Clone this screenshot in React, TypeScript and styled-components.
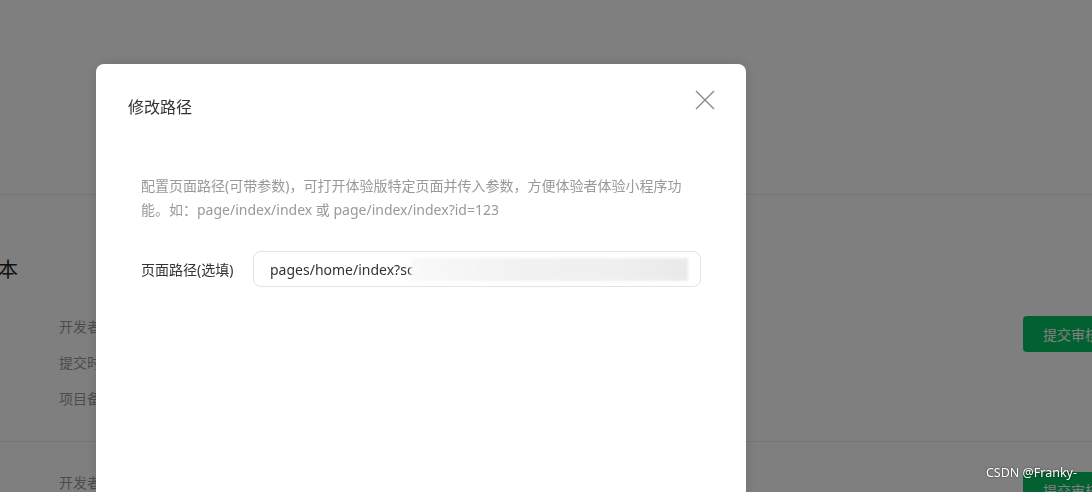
import React from "react"
import styled, { createGlobalStyle } from "styled-components"

const GlobalStyle = createGlobalStyle`
  html, body {
    margin: 0;
    padding: 0;
    background: #fff;
    overflow: hidden;
  }
  body {
    font-family: "Noto Sans", "Noto Sans CJK SC", sans-serif;
    width: 1092px;
    height: 492px;
  }
`

const Page = styled.div`
  width: 1240px;
  height: 492px;
  margin-left: -82px;
  background: #fff;
  overflow: hidden;
`

const TopArea = styled.div`
  height: 194px;
  border-bottom: 1px solid #eaeaea;
`

const Section = styled.section<{ $top: number }>`
  padding: ${(p) => p.$top}px 0 24px;
  border-bottom: 1px solid #eaeaea;
`

const SectionTitle = styled.h2`
  margin: 0 0 24px 20px;
  font-size: 20px;
  line-height: 30px;
  font-weight: 400;
  color: #222;
`

const InfoRow = styled.div`
  display: flex;
  align-items: flex-start;
  padding-left: 141px;
  padding-right: 39px;
`

const InfoList = styled.div`
  flex: 1;
  display: flex;
  flex-direction: column;
`

const InfoItem = styled.div`
  font-size: 14px;
  line-height: 36px;
  height: 36px;
  color: #999;
`

const PrimaryButton = styled.button`
  margin-top: 7px;
  height: 36px;
  border: none;
  border-radius: 4px;
  background: #07c160;
  color: #fff;
  font-family: inherit;
  font-size: 14px;
  padding: 0 20px;
`

const Mask = styled.div`
  position: fixed;
  inset: 0;
  background: rgba(0, 0, 0, 0.5);
  padding: 64px 0 0 96px;
`

const Modal = styled.div`
  width: 650px;
  height: 460px;
  background: #fff;
  border-radius: 8px;
  box-shadow: 0 0 14px rgba(0, 0, 0, 0.12);
`

const ModalHeader = styled.div`
  display: flex;
  align-items: flex-start;
  justify-content: space-between;
  padding: 31px 30px 0 32px;
`

const ModalTitle = styled.h3`
  margin: 0;
  font-size: 16px;
  line-height: 24px;
  font-weight: 400;
  color: #333;
`

const CloseButton = styled.button`
  margin-top: -6px;
  width: 22px;
  height: 22px;
  border: none;
  background: none;
  padding: 0;
  display: flex;
  align-items: center;
  justify-content: center;
`

const ModalBody = styled.div`
  padding: 55px 45px 0;
`

const Desc = styled.p`
  margin: 0;
  max-width: 548px;
  font-size: 14px;
  line-height: 24px;
  color: #999;
`

const FormRow = styled.div`
  display: flex;
  align-items: center;
  margin-top: 29px;
`

const FormLabel = styled.label`
  width: 112px;
  flex-shrink: 0;
  font-size: 14px;
  color: #333;
`

const InputBox = styled.div`
  flex: 1;
  height: 34px;
  border: 1px solid #e3e3e3;
  border-radius: 8px;
  display: flex;
  align-items: center;
  padding: 0 12px 0 16px;
  overflow: hidden;
`

const InputText = styled.span`
  font-size: 14px;
  color: #333;
  white-space: nowrap;
`

const Blur = styled.span`
  flex: 1;
  height: 23px;
  margin-left: -3px;
  background: linear-gradient(90deg, #f9f9f9 0%, #f1f1f1 40%, #efefef 75%, #e9e9e9 100%);
  filter: blur(1.5px);
`

const Watermark = styled.div`
  position: fixed;
  right: 15px;
  bottom: 11px;
  font-size: 12.5px;
  color: #fff;
  text-shadow: 0 0 2px rgba(0, 0, 0, 0.7);
  font-family: "Noto Sans", sans-serif;
`

const CloseIcon = () => (
  <svg width="20" height="20" viewBox="0 0 20 20">
    <path d="M1 1 L19 19 M19 1 L1 19" stroke="#8a8a8a" strokeWidth="1.4" fill="none" />
  </svg>
)

export default function App() {
  return (
    <>
      <GlobalStyle />
      <Page>
        <TopArea />
        <Section $top={60}>
          <SectionTitle>体验版本</SectionTitle>
          <InfoRow>
            <InfoList>
              <InfoItem>开发者</InfoItem>
              <InfoItem>提交时间</InfoItem>
              <InfoItem>项目备注</InfoItem>
            </InfoList>
            <PrimaryButton>提交审核</PrimaryButton>
          </InfoRow>
        </Section>
        <Section $top={23}>
          <InfoRow>
            <InfoList>
              <InfoItem>开发者</InfoItem>
            </InfoList>
            <PrimaryButton>提交审核</PrimaryButton>
          </InfoRow>
        </Section>
      </Page>
      <Mask>
        <Modal>
          <ModalHeader>
            <ModalTitle>修改路径</ModalTitle>
            <CloseButton aria-label="关闭">
              <CloseIcon />
            </CloseButton>
          </ModalHeader>
          <ModalBody>
            <Desc>
              配置页面路径(可带参数)，可打开体验版特定页面并传入参数，方便体验者体验小程序功能。如：page/index/index 或 page/index/index?id=123
            </Desc>
            <FormRow>
              <FormLabel>页面路径(选填)</FormLabel>
              <InputBox>
                <InputText>pages/home/index?sc</InputText>
                <Blur />
              </InputBox>
            </FormRow>
          </ModalBody>
        </Modal>
      </Mask>
      <Watermark>CSDN @Franky-</Watermark>
    </>
  )
}
